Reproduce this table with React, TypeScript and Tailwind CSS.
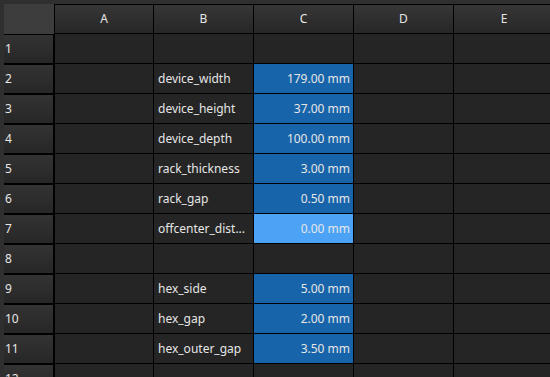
import React from "react";

const rows: { b: string; c: string; hl?: boolean }[] = [
  { b: "", c: "" },
  { b: "device_width", c: "179.00 mm" },
  { b: "device_height", c: "37.00 mm" },
  { b: "device_depth", c: "100.00 mm" },
  { b: "rack_thickness", c: "3.00 mm" },
  { b: "rack_gap", c: "0.50 mm" },
  { b: "offcenter_dist...", c: "0.00 mm", hl: true },
  { b: "", c: "" },
  { b: "hex_side", c: "5.00 mm" },
  { b: "hex_gap", c: "2.00 mm" },
  { b: "hex_outer_gap", c: "3.50 mm" },
  { b: "", c: "" },
];

export default function App() {
  return (
    <div
      className="w-[550px] h-[377px] overflow-hidden bg-[#2f2f2f] pl-[4px] pt-[4px] text-[12px] text-[#e6e6e6]"
      style={{ fontFamily: '"Noto Sans", "Open Sans", sans-serif' }}
    >
      <div className="grid grid-cols-[50px_98px_99px_99px_99px_100px] auto-rows-[29px] grid-rows-[29px] gap-[1px] bg-black">
        <div className="bg-[#3d3d3d] h-[30px]" />
        {["A", "B", "C", "D", "E"].map((l) => (
          <div
            key={l}
            className="mt-[1px] h-[28px] flex items-center justify-center bg-gradient-to-b from-[#363636] to-[#272727]"
          >
            {l}
          </div>
        ))}
        {rows.map((r, i) => (
          <React.Fragment key={i}>
            <div className="border-t border-r border-black h-[29px] bg-gradient-to-b from-[#333333] to-[#272727] flex items-center pl-[1px]">
              {i + 1}
            </div>
            <div className="bg-[#252525]" />
            <div className="bg-[#252525] flex items-center pl-[4px] whitespace-nowrap">
              {r.b}
            </div>
            <div
              className={
                r.c
                  ? r.hl
                    ? "bg-[#4ca3f6] flex items-center justify-end pr-[3px]"
                    : "bg-[#1864aa] flex items-center justify-end pr-[3px]"
                  : "bg-[#252525]"
              }
            >
              {r.c}
            </div>
            <div className="bg-[#252525]" />
            <div className="bg-[#252525]" />
          </React.Fragment>
        ))}
      </div>
    </div>
  );
}
